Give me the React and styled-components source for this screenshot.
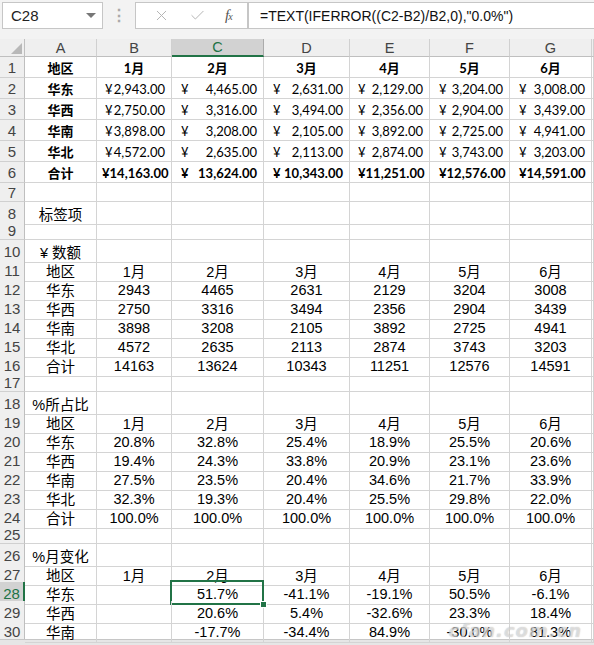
import React from 'react'
import styled, { createGlobalStyle } from 'styled-components'
import { X, Check } from 'lucide-react'

const GlobalStyle = createGlobalStyle`
  html, body { margin: 0; padding: 0; background: #fff; }
  body { overflow: hidden; font-family: "Liberation Sans", "Noto Sans CJK SC", sans-serif; }
`

const COLS = '25px 72px 75px 92px 86px 80px 80px 82px 1fr'
const GRID = '#d4d4d4'
const GREEN = '#217346'

const Page = styled.div`
  position: relative;
  width: 594px;
  height: 645px;
  overflow: hidden;
  display: flex;
  flex-direction: column;
  background: #f3f3f3;
`

// ---- formula bar ----
const FormulaBar = styled.div`
  height: 40px;
  box-sizing: border-box;
  padding: 2px 0 10px 2px;
  display: flex;
  align-items: stretch;
`

const NameBox = styled.div`
  width: 101px;
  box-sizing: border-box;
  background: #fff;
  border: 1px solid #c6c6c6;
  display: flex;
  align-items: center;
  justify-content: space-between;
  padding: 0 6px 0 8px;
  font-family: "Liberation Sans", sans-serif;
  font-size: 15px;
  color: #222;
`

const Caret = styled.span`
  width: 0;
  height: 0;
  border-left: 5px solid transparent;
  border-right: 5px solid transparent;
  border-top: 5px solid #777;
`

const Dots = styled.div`
  width: 32px;
  display: flex;
  align-items: center;
  justify-content: center;
  color: #aaa;
  font-size: 16px;
  font-weight: bold;
`

const ActionBox = styled.div`
  width: 113px;
  box-sizing: border-box;
  background: #fff;
  border: 1px solid #c6c6c6;
  display: flex;
  align-items: center;
  justify-content: space-around;
  padding: 0 6px 0 8px;
  color: #b4b4b4;
`

const Fx = styled.span`
  font-family: "Liberation Serif", serif;
  font-style: italic;
  font-size: 15px;
  color: #555;
  letter-spacing: -1px;
  sub { font-size: 10px; vertical-align: baseline; }
`

const FormulaInput = styled.div`
  flex: 1;
  background: #fff;
  border: 1px solid #c6c6c6;
  border-right: none;
  display: flex;
  align-items: center;
  padding-left: 11px;
  font-family: "Liberation Sans", sans-serif;
  font-size: 14px;
  color: #111;
  white-space: nowrap;
`

// ---- sheet ----
const Sheet = styled.div`
  flex: 1;
  display: flex;
  flex-direction: column;
  background: #fff;
`

const Row = styled.div`
  display: grid;
  grid-template-columns: ${COLS};
  height: ${p => p.$h}px;
  flex: none;
`

const Corner = styled.div`
  background: #efefef;
  border-right: 1px solid #bfbfbf;
  border-bottom: 1px solid #bfbfbf;
  display: flex;
  align-items: flex-end;
  justify-content: flex-end;
  padding: 0 2px 2px 0;
`

const ColHead = styled.div`
  box-sizing: border-box;
  background: ${p => (p.$active ? '#d2d2d2' : '#efefef')};
  border-right: 1px solid ${p => (p.$active ? '#ababab' : '#d0d0d0')};
  border-bottom: ${p => (p.$active ? `2px solid ${GREEN}` : '1px solid #bfbfbf')};
  color: ${p => (p.$active ? GREEN : '#444')};
  display: flex;
  align-items: center;
  justify-content: center;
  font-family: "Liberation Sans", sans-serif;
  font-size: 14.5px;
`

const RowHead = styled.div`
  box-sizing: border-box;
  background: ${p => (p.$active ? '#d2d2d2' : '#efefef')};
  border-right: ${p => (p.$active ? `2px solid ${GREEN}` : '1px solid #bfbfbf')};
  border-bottom: 1px solid #d0d0d0;
  color: ${p => (p.$active ? GREEN : '#444')};
  display: flex;
  align-items: center;
  justify-content: center;
  font-family: "Liberation Sans", sans-serif;
  font-size: 15px;
`

const Cell = styled.div`
  position: relative;
  box-sizing: border-box;
  border-right: 1px solid ${GRID};
  border-bottom: 1px solid ${GRID};
  display: flex;
  align-items: center;
  justify-content: center;
  padding-top: 1px;
  white-space: nowrap;
  color: #000;
  font-family: ${p => (p.$top ? 'Lato, "Noto Sans CJK SC"' : '"Liberation Sans", "Noto Sans CJK SC"')}, sans-serif;
  font-size: ${p => (p.$top ? '13px' : '14.5px')};
  font-weight: ${p => (p.$bold ? 700 : 400)};

  ${p => p.$selected && `
    &::after {
      content: '';
      position: absolute;
      left: -2px; top: -2px; right: -1px; bottom: -1px;
      border: 2px solid ${GREEN};
      pointer-events: none;
    }
    &::before {
      content: '';
      position: absolute;
      right: -4px; bottom: -4px;
      width: 5px; height: 5px;
      background: ${GREEN};
      border: 1px solid #fff;
      z-index: 2;
    }
  `}
`

const Acct = styled(Cell)`
  justify-content: space-between;
  padding: 1px 6px 0 ${p => p.$pl || 9}px;
`

const Footer = styled.div`
  height: 5px;
  flex: none;
  background: #e6e6e6;
  border-top: 1px solid #c6c6c6;
`

const Watermark = styled.div`
  position: absolute;
  right: 12px;
  bottom: 4px;
  font-family: "DejaVu Sans", sans-serif;
  font-style: italic;
  font-weight: bold;
  font-size: 18px;
  color: rgba(255, 255, 255, 0.5);
  text-shadow: 0 0 1px rgba(120, 120, 120, 0.55);
  letter-spacing: 1px;
  pointer-events: none;
`

// ---- data ----
const regions = ['华东', '华西', '华南', '华北']
const months = ['1月', '2月', '3月', '4月', '5月', '6月']
const amounts = [
  [2943, 4465, 2631, 2129, 3204, 3008],
  [2750, 3316, 3494, 2356, 2904, 3439],
  [3898, 3208, 2105, 3892, 2725, 4941],
  [4572, 2635, 2113, 2874, 3743, 3203],
]
const totals = [14163, 13624, 10343, 11251, 12576, 14591]
const shares = [
  ['20.8', '32.8', '25.4', '18.9', '25.5', '20.6'],
  ['19.4', '24.3', '33.8', '20.9', '23.1', '23.6'],
  ['27.5', '23.5', '20.4', '34.6', '21.7', '33.9'],
  ['32.3', '19.3', '20.4', '25.5', '29.8', '22.0'],
]
const changes = [
  ['', '51.7', '-41.1', '-19.1', '50.5', '-6.1'],
  ['', '20.6', '5.4', '-32.6', '23.3', '18.4'],
  ['', '-17.7', '-34.4', '84.9', '-30.0', '81.3'],
]

const fmt = n => n.toLocaleString('en-US', { minimumFractionDigits: 2, maximumFractionDigits: 2 })
const acctPad = [8, 9, 9, 8, 9, 9]

const CornerIcon = () => (
  <svg width="11" height="11" viewBox="0 0 11 11">
    <polygon points="11,0 11,11 0,11" fill="#b8b8b8" />
  </svg>
)

function LowRow({ n, cells, sel }) {
  return (
    <Row $h={19}>
      <RowHead $active={sel != null}>{n}</RowHead>
      {cells.map((c, i) => (
        <Cell key={i} $selected={sel === i}>{c}</Cell>
      ))}
      <Cell />
    </Row>
  )
}

export default function App() {
  const empty = ['', '', '', '', '', '', '']
  const low = []
  low.push({ n: 7, cells: empty })
  low.push({ n: 8, cells: ['标签项', '', '', '', '', '', ''] })
  low.push({ n: 9, cells: empty })
  low.push({ n: 10, cells: ['¥ 数额', '', '', '', '', '', ''] })
  low.push({ n: 11, cells: ['地区', ...months] })
  regions.forEach((r, i) => low.push({ n: 12 + i, cells: [r, ...amounts[i].map(String)] }))
  low.push({ n: 16, cells: ['合计', ...totals.map(String)] })
  low.push({ n: 17, cells: empty })
  low.push({ n: 18, cells: ['%所占比', '', '', '', '', '', ''] })
  low.push({ n: 19, cells: ['地区', ...months] })
  regions.forEach((r, i) => low.push({ n: 20 + i, cells: [r, ...shares[i].map(v => v + '%')] }))
  low.push({ n: 24, cells: ['合计', ...months.map(() => '100.0%')] })
  low.push({ n: 25, cells: empty })
  low.push({ n: 26, cells: ['%月变化', '', '', '', '', '', ''] })
  low.push({ n: 27, cells: ['地区', ...months] })
  changes.forEach((c, i) =>
    low.push({ n: 28 + i, cells: [regions[i], ...c.map(v => (v ? v + '%' : ''))], sel: i === 0 ? 2 : null })
  )

  return (
    <Page>
      <GlobalStyle />
      <FormulaBar>
        <NameBox>
          C28
          <Caret />
        </NameBox>
        <Dots>⋮</Dots>
        <ActionBox>
          <X size={17} strokeWidth={1.4} />
          <Check size={17} strokeWidth={1.4} />
          <Fx>f<sub>x</sub></Fx>
        </ActionBox>
        <FormulaInput>=TEXT(IFERROR((C2-B2)/B2,0),"0.0%")</FormulaInput>
      </FormulaBar>

      <Sheet>
        <Row $h={18}>
          <Corner><CornerIcon /></Corner>
          {['A', 'B', 'C', 'D', 'E', 'F', 'G'].map(l => (
            <ColHead key={l} $active={l === 'C'}>{l}</ColHead>
          ))}
          <ColHead />
        </Row>

        <Row $h={21}>
          <RowHead>1</RowHead>
          <Cell $top $bold>地区</Cell>
          {months.map(m => <Cell key={m} $top $bold>{m}</Cell>)}
          <Cell />
        </Row>
        {regions.map((r, i) => (
          <Row $h={21} key={r}>
            <RowHead>{2 + i}</RowHead>
            <Cell $top $bold>{r}</Cell>
            {amounts[i].map((v, j) => (
              <Acct $top key={j} $pl={acctPad[j]}>
                <span>¥</span>
                <span>{fmt(v)}</span>
              </Acct>
            ))}
            <Cell />
          </Row>
        ))}
        <Row $h={21}>
          <RowHead>6</RowHead>
          <Cell $top $bold>合计</Cell>
          {totals.map((v, j) => (
            <Acct $top $bold key={j} $pl={j === 0 ? 5 : acctPad[j]}>
              <span>¥</span>
              <span>{fmt(v)}</span>
            </Acct>
          ))}
          <Cell />
        </Row>

        {low.map(r => (
          <LowRow key={r.n} n={r.n} cells={r.cells} sel={r.sel} />
        ))}
      </Sheet>
      <Footer />
      <Watermark>cfan.com.cn</Watermark>
    </Page>
  )
}
